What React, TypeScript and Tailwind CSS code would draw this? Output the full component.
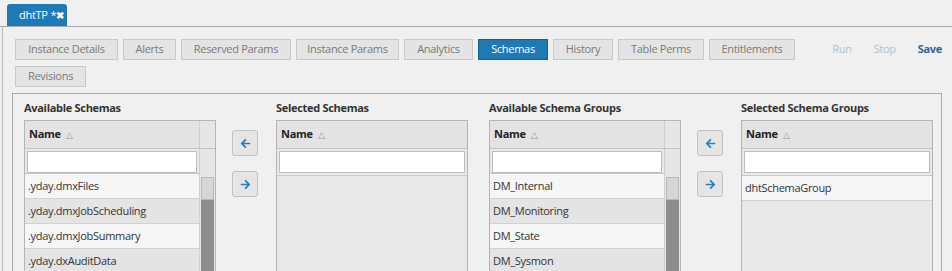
import React from 'react';
import { FaArrowLeft, FaArrowRight } from 'react-icons/fa';

const tabs: [string, string][] = [
  ['Instance Details', 'w-[103px]'],
  ['Alerts', 'w-[53px]'],
  ['Reserved Params', 'w-[110px]'],
  ['Instance Params', 'w-[103px]'],
  ['Analytics', 'w-[69px]'],
  ['Schemas', 'w-[70px]'],
  ['History', 'w-[60px]'],
  ['Table Perms', 'w-[86px]'],
  ['Entitlements', 'w-[86px]'],
  ['Revisions', 'w-[71px]'],
];

function NameHeader({ scroll }: { scroll: boolean }) {
  return (
    <div className="flex h-[28px] border-b border-[#c4c4c4] bg-[#e3e3e3]">
      <div className="flex flex-1 items-center gap-[5px] pl-[4px] text-[11px] font-bold text-[#222]">
        Name <span className="text-[9px] font-normal text-[#999]">△</span>
      </div>
      {scroll && <div className="w-[16px] border-l border-[#cfcfcf] bg-[#e6e6e6]" />}
    </div>
  );
}

function Grid({ rows, scroll }: { rows: string[]; scroll: boolean }) {
  return (
    <div className="flex h-[152px] flex-col border border-[#b5b5b5] bg-[#e9e9e9]">
      <NameHeader scroll={scroll} />
      <div className="flex flex-1 overflow-hidden">
        <div className="flex flex-1 flex-col">
          <div className="h-[27px] border-b border-[#c8c8c8] px-[2px] pt-[2px]">
            <div className="h-[22px] border border-[#bdbdbd] bg-white" />
          </div>
          {rows.map((r, i) => (
            <div
              key={r}
              className={`flex h-[25px] shrink-0 items-center border-b border-[#d2d2d2] pl-[3px] text-[11px] text-[#333] ${
                i % 2 === 0 ? 'bg-[#f6f6f6]' : 'bg-[#e4e4e4]'
              }`}
            >
              {r}
            </div>
          ))}
        </div>
        {scroll && (
          <div className="flex w-[16px] flex-col border-l border-[#cfcfcf] bg-[#e6e6e6]">
            <div className="h-[27px] shrink-0" />
            <div className="mx-[1px] mt-[1px] h-[23px] shrink-0 border border-[#b8b8b8] bg-[#d6d6d6]" />
            <div className="mx-[1px] flex-1 bg-[#8d8d8d]" />
          </div>
        )}
      </div>
    </div>
  );
}

function Column({ title, rows, scroll, className }: { title: string; rows: string[]; scroll: boolean; className: string }) {
  return (
    <div className={`flex w-[192px] shrink-0 flex-col ${className}`}>
      <div className="h-[26px] pt-[6px] text-[11px] font-bold text-[#333]">{title}</div>
      <Grid rows={rows} scroll={scroll} />
    </div>
  );
}

function Arrows() {
  return (
    <div className="ml-[16px] flex w-[26px] shrink-0 flex-col gap-[15px] pt-[36px]">
      <button className="flex h-[26px] w-[26px] items-center justify-center rounded-[3px] border border-[#c2c2c2] bg-[#e5e5e5] text-[#2a7cb8]">
        <FaArrowLeft size={11} />
      </button>
      <button className="flex h-[26px] w-[26px] items-center justify-center rounded-[3px] border border-[#c2c2c2] bg-[#e5e5e5] text-[#2a7cb8]">
        <FaArrowRight size={11} />
      </button>
    </div>
  );
}

export default function App() {
  return (
    <div
      className="h-[271px] w-[952px] overflow-hidden bg-[#f0f0f0] tracking-[-0.3px]"
      style={{ fontFamily: '"Open Sans", "Noto Sans", sans-serif' }}
    >
      {/* tab strip */}
      <div className="flex h-[27px] border-b border-[#a8a8a8] pl-[7px] pt-[4px]">
        <div className="flex h-[22px] w-[60px] items-center rounded-t-[3px] bg-[#1e7ab6] pl-[12px] text-[11px] text-white">
          dhtTP<span className="ml-[3px]">*</span>
          <span className="text-[10px] font-bold">✖</span>
        </div>
      </div>

      <div className="ml-[2px] h-[244px] border-l border-[#bdbdbd] pl-[9px] pr-[10px]">
        {/* button rows */}
        <div className="flex pt-[12px]">
          <div className="flex w-[790px] flex-wrap gap-x-[5px] gap-y-[6px] pl-[3px]">
            {tabs.map(([t, w]) =>
              t === 'Schemas' ? (
                <button
                  key={t}
                  className={`h-[21px] ${w} border border-[#14608f] bg-[#1f79b5] text-[11px] text-white`}
                >
                  {t}
                </button>
              ) : (
                <button
                  key={t}
                  className={`h-[21px] ${w} border border-[#c9c9c9] bg-[#e4e4e4] text-[11px] text-[#7a7a7a]`}
                >
                  {t}
                </button>
              )
            )}
          </div>
          <div className="ml-auto flex gap-[22px] pt-[2px] text-[11px]">
            <span className="text-[#a6c3d8]">Run</span>
            <span className="text-[#a6c3d8]">Stop</span>
            <span className="font-bold text-[#26689a]">Save</span>
          </div>
        </div>

        {/* schemas panel */}
        <div className="mt-[6px] flex h-[200px] border-l border-r border-t border-[#aaaaaa] pl-[11px]">
          <Column
            title="Available Schemas"
            className=""
            scroll
            rows={['.yday.dmxFiles', '.yday.dmxJobScheduling', '.yday.dmxJobSummary', '.yday.dxAuditData']}
          />
          <Arrows />
          <Column title="Selected Schemas" className="ml-[18px]" scroll={false} rows={[]} />
          <Column
            title="Available Schema Groups"
            className="ml-[21px]"
            scroll
            rows={['DM_Internal', 'DM_Monitoring', 'DM_State', 'DM_Sysmon']}
          />
          <Arrows />
          <Column title="Selected Schema Groups" className="ml-[18px]" scroll={false} rows={['dhtSchemaGroup']} />
        </div>
      </div>
    </div>
  );
}
